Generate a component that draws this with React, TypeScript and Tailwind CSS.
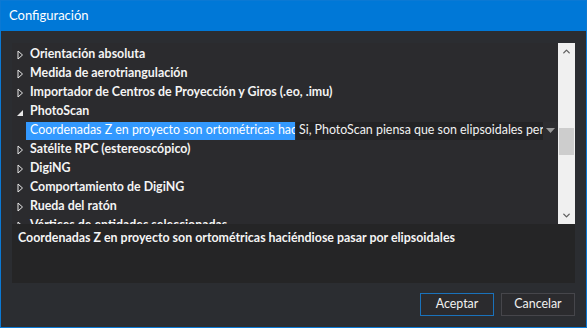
import { ChevronUp, ChevronDown } from "lucide-react";

const ROWS_BEFORE = [
  "Orientación absoluta",
  "Medida de aerotriangulación",
  "Importador de Centros de Proyección y Giros (.eo, .imu)",
];

const ROWS_AFTER = [
  "Satélite RPC (estereoscópico)",
  "DigiNG",
  "Comportamiento de DigiNG",
  "Rueda del ratón",
  "Vértices de entidades seleccionadas",
];

function Collapsed() {
  return (
    <svg width="7" height="10" viewBox="0 0 7 10" className="shrink-0">
      <path d="M1 1 L5.5 5 L1 9 Z" fill="none" stroke="#e8e8e8" strokeWidth="1" />
    </svg>
  );
}

function Expanded() {
  return (
    <svg width="7" height="10" viewBox="0 0 7 10" className="shrink-0">
      <path d="M6 3 L6 9 L0 9 Z" fill="#e8e8e8" />
    </svg>
  );
}

function GroupRow({ label, open }: { label: string; open?: boolean }) {
  return (
    <div className="flex h-[19px] items-center whitespace-nowrap">
      <div className="flex w-[18px] shrink-0 pl-[5px]">{open ? <Expanded /> : <Collapsed />}</div>
      <span className="text-[12.4px] font-bold text-[#f4f4f4]">{label}</span>
    </div>
  );
}

export default function App() {
  return (
    <div
      className="flex h-[328px] w-[587px] flex-col border border-[#0b79d4] bg-[#2b2d31] text-[#f1f1f1]"
      style={{ fontFamily: "Lato, 'Noto Sans', sans-serif" }}
    >
      {/* Title */}
      <div className="flex h-[30px] shrink-0 items-center bg-[#0078d7] pl-[8px] text-[13px] text-white">
        Configuración
      </div>

      <div className="flex flex-1 flex-col px-[11px] pt-[12px] pb-[10px]">
        {/* Tree */}
        <div className="flex h-[181px] bg-[#2b2b2e]">
          <div className="flex-1 overflow-hidden pt-[2px]">
            {ROWS_BEFORE.map((r) => (
              <GroupRow key={r} label={r} />
            ))}
            <GroupRow label="PhotoScan" open />
            <div className="flex h-[19px] items-center whitespace-nowrap">
              <div className="w-[14px] shrink-0" />
              <div className="flex h-[18px] w-[269px] shrink-0 items-center overflow-hidden bg-[#3399ff] pl-[4px] text-[12.4px] text-white">
                Coordenadas Z en proyecto son ortométricas haciéndiose pasar por elipsoidales
              </div>
              <div className="ml-[1px] flex h-[18px] flex-1 items-center overflow-hidden bg-[#232325]">
                <div className="flex-1 overflow-hidden pl-[3px] text-[12.4px] text-[#f1f1f1]">
                  Si, PhotoScan piensa que son elipsoidales pero son ortométricas
                </div>
                <div className="flex h-full w-[15px] shrink-0 items-center justify-center bg-[#2d2d30]">
                  <svg width="9" height="5" viewBox="0 0 9 5">
                    <path d="M0 0 H9 L4.5 5 Z" fill="#999999" />
                  </svg>
                </div>
              </div>
            </div>
            {ROWS_AFTER.map((r) => (
              <GroupRow key={r} label={r} />
            ))}
          </div>
          {/* Scrollbar */}
          <div className="flex w-[17px] shrink-0 flex-col bg-[#f0f0f0]">
            <div className="flex h-[17px] items-center justify-center text-[#606060]">
              <ChevronUp size={11} strokeWidth={3} />
            </div>
            <div className="h-[68px]" />
            <div className="mx-px h-[27px] bg-[#cdcdcd]" />
            <div className="flex-1" />
            <div className="flex h-[17px] items-center justify-center text-[#606060]">
              <ChevronDown size={11} strokeWidth={3} />
            </div>
          </div>
        </div>

        {/* Description */}
        <div className="h-[59px] bg-[#252526] px-[6px] pt-[5px] text-[12.4px] font-bold text-[#f4f4f4]">
          Coordenadas Z en proyecto son ortométricas haciéndiose pasar por elipsoidales
        </div>

        {/* Buttons */}
        <div className="mt-[10px] flex justify-end gap-[7px]">
          <button className="h-[23px] w-[74px] border border-[#1a72bb] bg-[#2b2b2e] text-[12.4px] text-[#f1f1f1]">
            Aceptar
          </button>
          <button className="h-[23px] w-[74px] border border-[#46464b] bg-[#2b2b2e] text-[12.4px] text-[#f1f1f1]">
            Cancelar
          </button>
        </div>
      </div>
    </div>
  );
}
